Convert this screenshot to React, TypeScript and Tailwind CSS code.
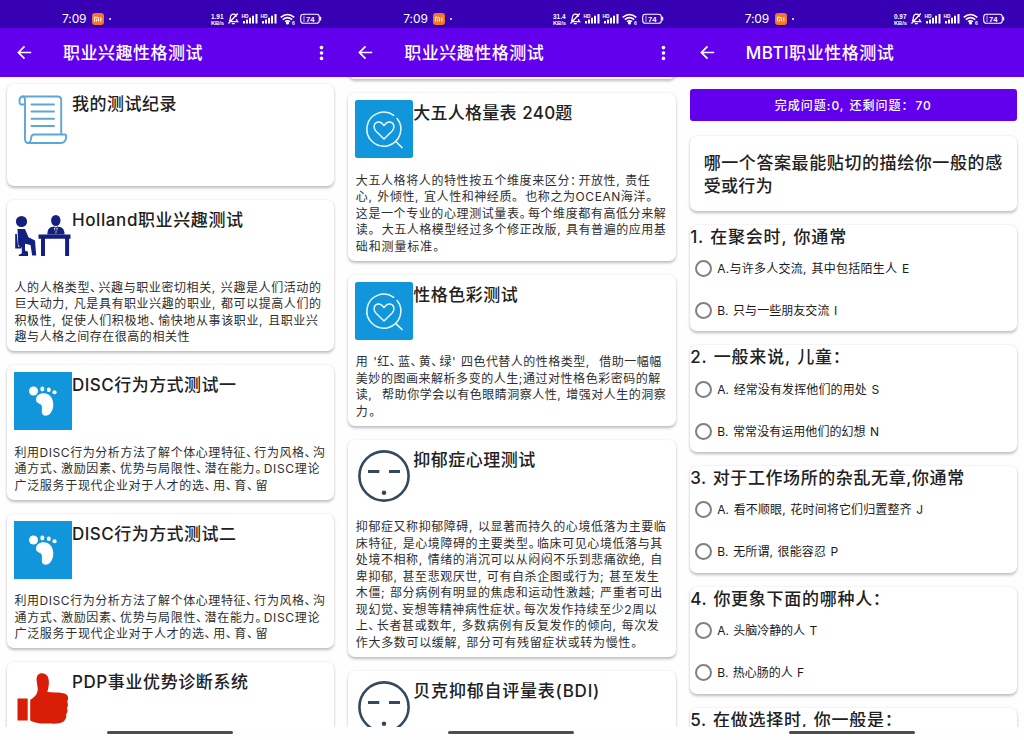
import { useLayoutEffect, useRef, useState, type ReactNode } from 'react';

const FONT = "font-[Inter,'Noto_Sans_CJK_SC',sans-serif]";

/** One line of text whose tracking is adjusted so that it spans `width` pixels. */
function Fit({ text, width, className = '' }: { text: string; width: number; className?: string }) {
  const ref = useRef<HTMLSpanElement>(null);
  const [spacing, setSpacing] = useState(0);
  useLayoutEffect(() => {
    const el = ref.current;
    if (!el || text.length < 2) return;
    el.style.letterSpacing = '0px';
    const natural = el.getBoundingClientRect().width;
    const next = (width - natural) / (text.length - 1);
    el.style.letterSpacing = `${next}px`;
    setSpacing(next);
  }, [text, width]);
  return (
    <span className={`block whitespace-pre ${className}`}>
      <span ref={ref} className="inline-block [font-feature-settings:'palt'] [word-spacing:1px]" style={{ letterSpacing: `${spacing}px` }}>
        {text.split(/([、。：])/).map((part, i) =>
          i % 2 ? (
            <span key={i} className="pr-[1.8px]">
              {part}
            </span>
          ) : (
            part
          ),
        )}
      </span>
    </span>
  );
}

function StatusIcons({ speed }: { speed: string }) {
  return (
    <svg className="h-[28px] w-[116px]" viewBox="208 0 116 28" fill="none" stroke="#fff">
      <g fill="#fff" stroke="none" className="font-['Liberation_Sans',sans-serif] font-bold">
        <text x="211" y="18.5" fontSize="7" textLength="12.5" lengthAdjust="spacingAndGlyphs">{speed}</text>
        <text x="211" y="24.5" fontSize="6" textLength="13" lengthAdjust="spacingAndGlyphs">KB/s</text>
        <text x="241.5" y="17.6" fontSize="5" textLength="7" lengthAdjust="spacingAndGlyphs">HD</text>
        <text x="260.5" y="17.6" fontSize="5" textLength="7" lengthAdjust="spacingAndGlyphs">HD</text>
        <text x="306" y="21.6" fontSize="7.5" textLength="8.5" lengthAdjust="spacingAndGlyphs">74</text>
        <text x="292" y="24.8" fontSize="5">6</text>
        <path d="M243 21h2v2.500h-2zM246 19.500h2v4h-2zM249 17.800h2v5.700h-2zM252 15.800h2v7.700h-2zM255.500 14h2v9.500h-2z" />
        <path d="M262 21h2v2.500h-2zM265 19.500h2v4h-2zM268 17.800h2v5.700h-2zM271 15.800h2v7.700h-2zM274.500 14h2v9.500h-2z" />
        <path d="M320 16.800h1.200v3.600H320z" />
        <circle cx="287.500" cy="22.900" r="1.600" />
      </g>
      <path d="M229.200 21.300c1-1 1.200-2 1.200-3.800 0-2 1.200-3.300 3-3.300 1.600 0 2.700 1.100 2.900 2.600M236.400 19c.2 1.100.5 1.800 1.200 2.600h-7M237.800 13.500l-9.300 10M231.800 23.600h3" strokeWidth="1.300" />
      <path d="M280.700 17.300q6.800-5.600 13.600 0M282.800 19.600q4.700-3.800 9.400 0M285 21.700q2.500-1.900 5 0" strokeWidth="1.600" />
      <rect x="300.700" y="14.200" width="18.600" height="9" rx="2.800" strokeWidth="1.100" />
      <path d="M303 15.500h2v6.400h-2z" fill="#fff" fillOpacity=".35" stroke="none" />
    </svg>
  );
}

function Phone({ title, titleWidth, speed, menu, children }: { title: string; titleWidth: number; speed: string; menu?: boolean; children: ReactNode }) {
  return (
    <section className="flex h-full min-w-0 flex-1 flex-col bg-[#fefefe]">
      <div className="flex h-[28px] shrink-0 items-start bg-[#3700b3] text-white">
        <span className="ml-[62px] mt-[10px] w-[25px] text-[12px] leading-[18px] tracking-[-0.1px]">7:09</span>
        <svg className="ml-[5px] mt-[12.5px] size-[12px]" viewBox="0 0 12 12" fill="none">
          <rect width="12" height="12" rx="3" fill="#f4762a" />
          <path d="M2.500 8.500V4.200h2.100q1.900 0 1.900 1.700v2.600M4.500 6v2.500M8.800 4.200v4.300" stroke="#fff" strokeWidth="1.100" />
        </svg>
        <span className="ml-[5px] mt-[18px] size-[2px] rounded-full bg-white" />
        <div className="ml-auto mr-[17px]">
          <StatusIcons speed={speed} />
        </div>
      </div>
      <header className="flex h-[49px] shrink-0 items-center bg-[#6200ee] text-white">
        <svg className="ml-[17px] size-[15px]" viewBox="0 0 15 15" fill="none" stroke="#fff" strokeWidth="1.700">
          <path d="M14.200 7.500H1.800M7.500 1.300L1.400 7.500l6.100 6.200" />
        </svg>
        <Fit text={title} width={titleWidth} className="ml-[31px] pt-px text-[17px] font-medium leading-[24px]" />
        {menu && (
          <svg className="ml-auto mr-[17px] h-[16px] w-[5px]" viewBox="0 0 5 16" fill="#fff">
            <circle cx="2.500" cy="2.600" r="1.800" />
            <circle cx="2.500" cy="8" r="1.800" />
            <circle cx="2.500" cy="13.400" r="1.800" />
          </svg>
        )}
      </header>
      <main className="h-[649.5px] shrink-0 overflow-hidden">{children}</main>
      <div className="flex justify-center pr-[2px] pt-[4px]">
        <div className="h-[3px] w-[126px] rounded-full bg-[#4d4d4d]" />
      </div>
    </section>
  );
}

const CARD = 'rounded-[7px] bg-white shadow-[0_1.5px_3px_rgba(0,0,0,0.26)]';

function ScrollIcon() {
  return (
    <svg className="size-[58px]" viewBox="0 0 58 58" fill="none" stroke="#5ba7d6" strokeWidth="1.900" strokeLinejoin="round" strokeLinecap="round">
      <path d="M11 13.500H6.700q-1.200-.3-1.200-3.400 0-4.600 3.300-4.600h35q3.400 0 3.400 3.600V43" />
      <path d="M8.800 5.500Q11 5.800 11 9v39q0 4 3.300 4" />
      <path d="M14 52q2.600 0 3.200-5.500 .3-3 3-3h31q.9 0 .9 2 0 6.500-5.600 6.500z" />
      <path d="M17.500 13.500h22.500M17.500 20.500h22.500M17.500 27.700h22.500M17.500 35h22.500" />
    </svg>
  );
}

function DeskIcon() {
  return (
    <svg className="size-[58px]" viewBox="0 0 58 58" fill="#14207f">
      <circle cx="7.500" cy="14.500" r="5.600" />
      <path d="M3.500 22h7.500l3.500 8.200 6.500 3.300 1.200 15h-4l-1.700-10.500-5.500-1.200v6.700l3 1.200v4.300H4.800v-1.300l3-1.200v-6.200q-3.600-.5-3.600-3.600z" />
      <path d="M1.200 27h1.600l1.300 12.800h3.300v1.600H1.200z" />
      <ellipse cx="41.800" cy="13.500" rx="4.700" ry="5.600" />
      <path d="M33.200 27.500q.2-6.600 4.600-7.400l2.600-.7 1.500 1 1.500-1 2.600.7q4.400.8 4.700 7.400z" />
      <path d="M39.800 20.600l2.100 6.400 2.100-6.400-2.100 1.200z" fill="#fff" />
      <path d="M41.900 21.200l1 1.300-1 4.500-1-4.500z" />
      <path d="M24.500 27.500h32v4.300h-1.400V49h-4V31.800H31V49h-4V31.800h-2.500z" />
    </svg>
  );
}

function FootIcon() {
  return (
    <svg className="size-[58px] bg-[#1296db]" viewBox="0 0 58 58" fill="#fff">
      <circle cx="19.500" cy="19" r="4.500" />
      <ellipse cx="28.300" cy="17" rx="2" ry="2.400" />
      <ellipse cx="34.800" cy="17.800" rx="2" ry="2.200" />
      <ellipse cx="40.500" cy="20.200" rx="2.100" ry="2" />
      <path d="M22 27.500c0-4 3.500-6.300 7.600-6.300 5.800 0 9.700 4.800 9.700 11.300 0 6.300-3.500 11.300-8 11.300-2.700 0-3.600-2-3.500-4.700 0-2 .6-4.600-.6-6.200-1.300-1.600-5.200-1.600-5.200-5.400z" />
    </svg>
  );
}

function ThumbIcon() {
  return (
    <svg className="size-[58px]" viewBox="0 0 58 58" fill="#d81e06">
      <path d="M3.500 29.500h10.200v22H3.500zM16.200 30.700c5-2.600 7.700-6 7.500-11.400-.2-2.400-.9-5.200-1.100-8-.3-4.500 1.800-7.100 5.300-7.100 4.800 0 7 3.500 7 9.300 0 3.600-.9 6.700-1.600 9.600 5.300.6 9.700.2 14.500.8 4 .5 6.300 2 6.300 5 0 1.500-.3 2.600-1 3.500 1.200 2.300 1.200 4.600-.2 6.400 1 2.500.7 4.800-.7 6.300.6 3-.6 5.700-2.600 7.500-3.200 2.400-8.500 2-14 2-7.600 0-14-.1-19.400-3.100z" />
    </svg>
  );
}

function HeartIcon() {
  return (
    <svg className="size-[58px] rounded-[2.5px] bg-[#1296db]" viewBox="0 0 58 58" fill="none" stroke="#e8faff" strokeWidth="1.500" strokeLinecap="round">
      <path d="M38.700 15.300a17 17 0 1 0 3.400 3.200" />
      <path d="M40.700 41.500l6.300 6" strokeWidth="1.700" />
      <path d="M29 39L20.600 30.700c-2.700-3-1.800-8.200 2.400-8.700 2.600-.3 4.400 1.200 6 3.500 1.600-2.300 3.400-3.800 6-3.500 4.200.5 5.100 5.700 2.400 8.700z" strokeLinejoin="round" />
    </svg>
  );
}

function FaceIcon() {
  return (
    <svg className="size-[58px]" viewBox="0 0 58 58" fill="none" stroke="#34495e">
      <circle cx="29" cy="29" r="24.600" strokeWidth="2.600" />
      <path d="M13 24.600h11.300M34 24.600h11" strokeWidth="3" />
      <circle cx="29" cy="45.700" r="2.300" fill="#34495e" stroke="none" />
    </svg>
  );
}

type Line = [string, number];

function TestCard({ icon, title, lines = [] }: { icon: ReactNode; title: Line; lines?: Line[] }) {
  return (
    <article className={`min-h-[102px] shrink-0 px-[7px] pb-[5.5px] pt-[7px] ${CARD}`}>
      <div className="flex h-[72.5px] items-start">
        {icon}
        <Fit text={title[0]} width={title[1]} className="pt-px text-[17px] font-medium leading-[25px] text-[#212121]" />
      </div>
      <div className="pl-[0.5px]">
        {lines.map(([text, width]) => (
          <Fit key={text} text={text} width={width} className="h-[16.5px] text-[12px] leading-[16.5px] text-[#2e2e2e]" />
        ))}
      </div>
    </article>
  );
}

const DISC: Line[] = [
  ['利用DISC行为分析方法了解个体心理特征、行为风格、沟', 310.5],
  ['通方式、激励因素、优势与局限性、潜在能力。DISC理论', 305],
  ['广泛服务于现代企业对于人才的选、用、育、留', 253],
];

const QUESTIONS: { title: Line; options: Line[] }[] = [
  { title: ['1. 在聚会时, 你通常', 156], options: [['A.与许多人交流, 其中包括陌生人 E', 192], ['B. 只与一些朋友交流 I', 120]] },
  { title: ['2. 一般来说, 儿童：', 153], options: [['A. 经常没有发挥他们的用处 S', 162], ['B. 常常没有运用他们的幻想 N', 162]] },
  { title: ['3. 对于工作场所的杂乱无章,你通常', 274], options: [['A. 看不顺眼, 花时间将它们归置整齐 J', 206], ['B. 无所谓, 很能容忍 P', 121]] },
  { title: ['4. 你更象下面的哪种人：', 193], options: [['A. 头脑冷静的人 T', 100], ['B. 热心肠的人 F', 87]] },
  { title: ['5. 在做选择时, 你一般是：', 205], options: [] },
];

export default function App() {
  return (
    <div className={`flex h-[740px] w-[1024px] overflow-hidden bg-white ${FONT}`}>
      <Phone title="职业兴趣性格测试" titleWidth={139.5} speed="1.91" menu>
        <div className="flex flex-col gap-[14px] px-[7px] pt-[7px]">
          <TestCard icon={<ScrollIcon />} title={['我的测试纪录', 104.5]} />
          <TestCard
            icon={<DeskIcon />}
            title={['Holland职业兴趣测试', 171]}
            lines={[
              ['人的人格类型、兴趣与职业密切相关, 兴趣是人们活动的', 306.5],
              ['巨大动力, 凡是具有职业兴趣的职业, 都可以提高人们的', 306.5],
              ['积极性, 促使人们积极地、愉快地从事该职业, 且职业兴', 303.5],
              ['趣与人格之间存在很高的相关性', 175],
            ]}
          />
          <TestCard icon={<FootIcon />} title={['DISC行为方式测试一', 164]} lines={DISC} />
          <TestCard icon={<FootIcon />} title={['DISC行为方式测试二', 164]} lines={DISC} />
          <TestCard icon={<ThumbIcon />} title={['PDP事业优势诊断系统', 176]} />
        </div>
      </Phone>

      <Phone title="职业兴趣性格测试" titleWidth={139.5} speed="31.4" menu>
        <div className="flex flex-col gap-[14px] px-[7px]">
          <div className={`-mt-[100px] h-[102px] shrink-0 ${CARD}`} />
          <TestCard
            icon={<HeartIcon />}
            title={['大五人格量表 240题', 159]}
            lines={[
              ['大五人格将人的特性按五个维度来区分：开放性, 责任', 294],
              ['心, 外倾性, 宜人性和神经质。 也称之为OCEAN海洋。', 298],
              ['这是一个专业的心理测试量表。每个维度都有高低分来解', 310],
              ['读。 大五人格模型经过多个修正改版, 具有普遍的应用基', 310],
              ['础和测量标准。', 85],
            ]}
          />
          <TestCard
            icon={<HeartIcon />}
            title={['性格色彩测试', 104.5]}
            lines={[
              ["用 '红、蓝、黄、绿' 四色代替人的性格类型,  借助一幅幅", 305.5],
              ['美妙的图画来解析多变的人生;通过对性格色彩密码的解', 304.5],
              ['读,  帮助你学会以有色眼睛洞察人性, 增强对人生的洞察', 310],
              ['力。', 21],
            ]}
          />
          <TestCard
            icon={<FaceIcon />}
            title={['抑郁症心理测试', 122]}
            lines={[
              ['抑郁症又称抑郁障碍, 以显著而持久的心境低落为主要临', 310],
              ['床特征, 是心境障碍的主要类型。临床可见心境低落与其', 306.5],
              ['处境不相称, 情绪的消沉可以从闷闷不乐到悲痛欲绝, 自', 306.5],
              ['卑抑郁, 甚至悲观厌世, 可有自杀企图或行为; 甚至发生', 303],
              ['木僵; 部分病例有明显的焦虑和运动性激越; 严重者可出', 306.5],
              ['现幻觉、妄想等精神病性症状。每次发作持续至少2周以', 301],
              ['上、长者甚或数年, 多数病例有反复发作的倾向, 每次发', 303],
              ['作大多数可以缓解, 部分可有残留症状或转为慢性。', 283],
            ]}
          />
          <TestCard icon={<FaceIcon />} title={['贝克抑郁自评量表(BDI)', 186]} />
        </div>
      </Phone>

      <Phone title="MBTI职业性格测试" titleWidth={148} speed="0.97">
        <div className="flex flex-col px-[7px] pt-[12px]">
          <button className="flex h-[32px] shrink-0 items-center justify-center rounded-[3px] bg-[#6200ee] text-white">
            <Fit text="完成问题:0, 还剩问题： 70" width={156} className="pt-[2px] text-[12px] font-medium" />
          </button>
          <div className={`mt-[15px] h-[75px] shrink-0 px-[14px] pt-[16px] ${CARD}`}>
            <Fit text="哪一个答案最能贴切的描绘你一般的感" width={298.5} className="text-[17px] font-medium leading-[23px] text-[#212121]" />
            <Fit text="受或行为" width={69} className="text-[17px] font-medium leading-[23px] text-[#212121]" />
          </div>
          <div className="mt-[13.5px] flex flex-col gap-[14px]">
            {QUESTIONS.map(({ title, options }) => (
              <article key={title[0]} className={`h-[106.8px] shrink-0 ${CARD}`}>
                <Fit text={title[0]} width={title[1]} className="h-[22.8px] pl-[0.5px] text-[17px] font-medium leading-[25px] text-[#212121]" />
                {options.map(([text, width]) => (
                  <label key={text} className="flex h-[42px] items-center pl-[5px]">
                    <span className="size-[17px] rounded-full border-2 border-[#808080] bg-white" />
                    <Fit text={text} width={width} className="ml-[5.5px] text-[12px] leading-[17px] text-[#1a1a1a]" />
                  </label>
                ))}
              </article>
            ))}
          </div>
        </div>
      </Phone>
    </div>
  );
}
